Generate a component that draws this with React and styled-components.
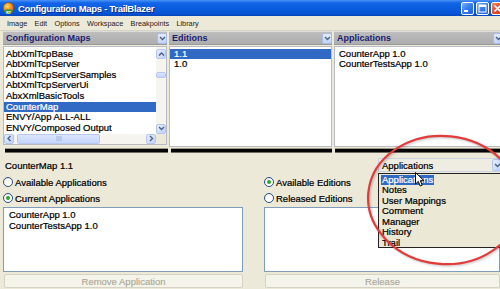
import React from "react";
import styled, { createGlobalStyle } from "styled-components";

const Global = createGlobalStyle`
  html, body { margin: 0; padding: 0; background: #ece9d8; }
  body { font-family: "Liberation Sans", Arial, sans-serif; }
`;

const FONT = `"Liberation Sans", Arial, sans-serif`;
const HEAVY = `-webkit-text-stroke: 0.22px currentColor;`;

const Window = styled.div`
  position: relative;
  width: 500px;
  height: 289px;
  overflow: hidden;
  display: flex;
  flex-direction: column;
  background: #ece9d8;
  font-family: ${FONT};
  color: #000;
`;

/* ---------- title bar ---------- */
const TitleBar = styled.div`
  height: 16px;
  flex: none;
  display: flex;
  align-items: center;
  padding-left: 2px;
  background: linear-gradient(to bottom, #4a93f7 0%, #1466e8 18%, #0a5cdf 55%, #0754d6 85%, #0446b8 100%);
`;

const TitleText = styled.span`
  margin-left: 3px;
  font-size: 9.5px;
  font-weight: 700;
  color: #fff;
  letter-spacing: -0.3px;
  text-shadow: 1px 1px 0 #0a2a8a;
  white-space: nowrap;
`;

const WinButtons = styled.div`
  margin-left: auto;
  margin-right: -4px;
  display: flex;
  gap: 2px;
`;

const WinButton = styled.div`
  width: 13px;
  height: 13px;
  box-sizing: border-box;
  border: 1px solid #fff;
  border-radius: 2px;
  display: flex;
  align-items: center;
  justify-content: center;
  background: ${(p) =>
    p.$close
      ? "linear-gradient(135deg, #f08a6a 0%, #e0502e 45%, #c33a17 100%)"
      : "linear-gradient(135deg, #7fb0fb 0%, #3a7ef0 45%, #2160d8 100%)"};
`;

/* ---------- menu bar ---------- */
const MenuBar = styled.div`
  height: 15px;
  flex: none;
  display: flex;
  align-items: center;
  gap: 7.3px;
  padding-left: 7px;
  font-size: 7.3px;
  color: #222;
  border-bottom: 1px solid #d8d4c2;
  box-sizing: border-box;
`;

const MenuItem = styled.span`
  white-space: nowrap;
`;

/* ---------- top panes ---------- */
const Panes = styled.div`
  height: 115px;
  flex: none;
  display: grid;
  grid-template-columns: 164px 163px 169px;
  column-gap: 2px;
  padding-left: 3px;
  padding-bottom: 1px;
  box-sizing: border-box;
`;

const Pane = styled.div`
  display: flex;
  flex-direction: column;
  min-width: 0;
`;

const PaneHeader = styled.div`
  height: 14px;
  flex: none;
  box-sizing: border-box;
  display: flex;
  align-items: center;
  padding-left: 3px;
  background: linear-gradient(to bottom, #bdbdbd, #adadad);
  border-top: 1px solid #dcdcdc;
  border-bottom: 1px solid #9a9a9a;
  font-size: 9px;
  font-weight: 700;
  color: #1c1c72;
  white-space: nowrap;
`;

const HeaderButton = styled.div`
  margin-left: auto;
  width: 10px;
  height: 11px;
  box-sizing: border-box;
  border: 1px solid #a9bbe6;
  border-radius: 2px;
  background: linear-gradient(to bottom, #e3ebfd, #c3d3f8);
  display: flex;
  align-items: center;
  justify-content: center;
`;

const ListBox = styled.div`
  margin-top: 1px;
  margin-bottom: ${(p) => (p.$scroll ? 2 : 0)}px;
  flex: 1;
  min-height: 0;
  background: #fff;
  border: 1px solid #b9bcc4;
  display: grid;
  grid-template-columns: ${(p) => (p.$scroll ? "1fr 10px" : "1fr")};
  grid-template-rows: ${(p) => (p.$scroll ? "1fr 10px" : "1fr")};
  overflow: hidden;
`;

const Items = styled.div`
  padding-top: 1.5px;
  min-width: 0;
  overflow: hidden;
`;

const Row = styled.div`
  height: 10.67px;
  line-height: 10.67px;
  font-size: 9.5px;
  ${HEAVY}
  padding-left: ${(p) => p.$inset}px;
  white-space: nowrap;
  color: ${(p) => (p.$selected ? "#fff" : "#000")};
  background: ${(p) => (p.$selected ? "#316ac5" : "transparent")};
`;

const VScroll = styled.div`
  display: flex;
  flex-direction: column;
  background: #f5f4ef;
  padding-top: 2px;
`;

const HScroll = styled.div`
  display: flex;
  align-items: center;
  background: #f5f4ef;
`;

const Corner = styled.div`
  background: #ece9d8;
`;

const ScrollArrow = styled.div`
  width: 10px;
  height: 10px;
  flex: none;
  box-sizing: border-box;
  border: 1px solid #b5c7f1;
  border-radius: 2px;
  background: linear-gradient(135deg, #e6eefd, #bfd1f9);
  display: flex;
  align-items: center;
  justify-content: center;
`;

const Track = styled.div`
  flex: 1;
  display: flex;
  flex-direction: ${(p) => (p.$vertical ? "column" : "row")};
`;

const Thumb = styled.div`
  flex: none;
  box-sizing: border-box;
  border: 1px solid #b5c7f1;
  border-radius: 2px;
  background: linear-gradient(to bottom, #dbe5fd, #c5d5f9);
  display: flex;
  align-items: center;
  justify-content: center;
`;

/* ---------- splitter ---------- */
const Splitter = styled.div`
  height: 9px;
  flex: none;
  display: flex;
  gap: 3px;
  padding: 2px 0 2px 5px;
  box-sizing: border-box;
`;

const SplitBar = styled.div`
  flex: ${(p) => (p.$w ? `0 0 ${p.$w}px` : "1")};
  background: linear-gradient(to bottom, #9c9a90 0, #9c9a90 1px, #050505 1px, #050505 4px, #6d6b62 4px);
`;

/* ---------- bottom panel ---------- */
const Bottom = styled.div`
  flex: 1;
  display: grid;
  grid-template-columns: 240px 1fr;
  column-gap: 21px;
  padding: 3px 0 0 3px;
  min-height: 0;
`;

const Column = styled.div`
  display: flex;
  flex-direction: column;
  min-width: 0;
`;

const TopRow = styled.div`
  height: 14px;
  flex: none;
  display: flex;
  align-items: center;
  margin-bottom: 2px;
`;

const Label = styled.span`
  font-size: 9.5px;
  ${HEAVY}
  padding-left: 2px;
  white-space: nowrap;
`;

const RadioRow = styled.label`
  height: 16px;
  flex: none;
  display: flex;
  align-items: center;
  gap: 2px;
  font-size: 9.5px;
  ${HEAVY}
  white-space: nowrap;
`;

const RadioDot = styled.span`
  width: 10px;
  height: 10px;
  box-sizing: border-box;
  border-radius: 50%;
  border: 1px solid #2a4f86;
  -webkit-text-stroke: 0;
  background: radial-gradient(circle at 60% 60%, #ffffff 0%, #ffffff 40%, #e4e2d7 100%);
  display: flex;
  align-items: center;
  justify-content: center;
  &::after {
    content: "";
    width: 4px;
    height: 4px;
    border-radius: 50%;
    background: ${(p) => (p.$checked ? "#2ea52e" : "transparent")};
  }
`;

const Box = styled.div`
  margin-top: 1px;
  height: 65px;
  flex: none;
  box-sizing: border-box;
  background: #fff;
  border: 1px solid #7f9db9;
  padding-top: 2px;
`;

const BoxRow = styled.div`
  height: 10.67px;
  line-height: 10.67px;
  font-size: 9.5px;
  ${HEAVY}
  padding-left: 5px;
  white-space: nowrap;
`;

const Button = styled.div`
  margin-top: 2px;
  margin-left: 1px;
  height: 14px;
  flex: none;
  box-sizing: border-box;
  border: 1px solid #d6d3c4;
  border-radius: 2px;
  background: #f5f4ea;
  display: flex;
  align-items: center;
  justify-content: center;
  font-size: 9.5px;
  -webkit-text-stroke: 0.15px currentColor;
  color: #aca899;
  white-space: nowrap;
`;

const Combo = styled.div`
  position: relative;
  margin-left: 114px;
  flex: 1;
  height: 14px;
  box-sizing: border-box;
  border: 1px solid #c9d3e2;
  background: #efede2;
  display: flex;
  align-items: center;
  padding-left: 3px;
  font-size: 9.5px;
  ${HEAVY}
  white-space: nowrap;
  margin-right: -3px;
`;

const ComboArrow = styled.div`
  margin-left: auto;
  width: 10px;
  height: 12px;
  box-sizing: border-box;
  border: 1px solid #b5c7f1;
  border-radius: 2px;
  background: linear-gradient(135deg, #e6eefd, #bfd1f9);
  display: flex;
  align-items: center;
  justify-content: center;
`;

const DropList = styled.div`
  position: absolute;
  top: 14px;
  left: -1px;
  width: 126px;
  height: 75px;
  box-sizing: border-box;
  border: 1px solid #222;
  background: #ebe8d6;
  padding-top: 0.5px;
  z-index: 5;
`;

const DropItem = styled.div`
  height: 10.5px;
  line-height: 10.5px;
  font-size: 9.5px;
  padding-left: 2px;
`;

const DropText = styled.span`
  padding: 0 1px;
  color: ${(p) => (p.$selected ? "#fff" : "#000")};
  background: ${(p) => (p.$selected ? "#316ac5" : "transparent")};
  display: inline-block;
`;

const Annotation = styled.svg`
  position: absolute;
  left: 0;
  top: 0;
  pointer-events: none;
  z-index: 10;
  filter: drop-shadow(1px 1px 1px rgba(0, 0, 0, 0.25));
`;

const Cursor = styled.svg`
  position: absolute;
  left: 415px;
  top: 172px;
  z-index: 11;
  pointer-events: none;
`;

/* ---------- small drawings ---------- */
const Chevron = ({ dir = "down", color = "#4d6185" }) => {
  const paths = {
    down: "M1 2 L3.5 4.5 L6 2",
    up: "M1 4.5 L3.5 2 L6 4.5",
    left: "M4.5 1 L2 3.5 L4.5 6",
    right: "M2 1 L4.5 3.5 L2 6",
  };
  return (
    <svg width="7" height="7" viewBox="0 0 7 7">
      <path d={paths[dir]} fill="none" stroke={color} strokeWidth="1.4" />
    </svg>
  );
};

const AppIcon = () => (
  <svg width="13" height="13" viewBox="0 0 13 13">
    <defs>
      <radialGradient id="ai" cx="40%" cy="35%" r="70%">
        <stop offset="0%" stopColor="#ffe06a" />
        <stop offset="45%" stopColor="#f49a22" />
        <stop offset="100%" stopColor="#c8401a" />
      </radialGradient>
    </defs>
    <circle cx="6.5" cy="6" r="5.5" fill="url(#ai)" stroke="#7a3a10" strokeWidth="0.6" />
    <path d="M2 8.5 Q6.5 6 11 8.5 L10 11 Q6.5 13 3 11 Z" fill="#3c9a3c" />
    <text x="6.5" y="11.8" fontSize="3.5" fontFamily="Liberation Sans" fontWeight="700" fill="#fff" textAnchor="middle">
      RT
    </text>
  </svg>
);

const configMaps = [
  "AbtXmlTcpBase",
  "AbtXmlTcpServer",
  "AbtXmlTcpServerSamples",
  "AbtXmlTcpServerUi",
  "AbxXmlBasicTools",
  "CounterMap",
  "ENVY/App ALL-ALL",
  "ENVY/Composed Output",
];

const dropItems = ["Applications", "Notes", "User Mappings", "Comment", "Manager", "History", "Trail"];

export default function App() {
  return (
    <>
      <Global />
      <Window>
        <TitleBar>
          <AppIcon />
          <TitleText>Configuration Maps - TrailBlazer</TitleText>
          <WinButtons>
            <WinButton>
              <svg width="9" height="9" viewBox="0 0 9 9">
                <rect x="1" y="6" width="4" height="2" fill="#fff" />
              </svg>
            </WinButton>
            <WinButton>
              <svg width="9" height="9" viewBox="0 0 9 9">
                <rect x="1" y="1" width="7" height="7" fill="none" stroke="#fff" strokeWidth="1" />
                <rect x="1" y="1" width="7" height="2" fill="#fff" />
              </svg>
            </WinButton>
            <WinButton $close>
              <svg width="9" height="9" viewBox="0 0 9 9">
                <path d="M1.5 1.5 L7.5 7.5 M7.5 1.5 L1.5 7.5" stroke="#fff" strokeWidth="1.6" />
              </svg>
            </WinButton>
          </WinButtons>
        </TitleBar>

        <MenuBar>
          {["Image", "Edit", "Options", "Workspace", "Breakpoints", "Library"].map((m) => (
            <MenuItem key={m}>{m}</MenuItem>
          ))}
        </MenuBar>

        <Panes>
          <Pane>
            <PaneHeader>
              Configuration Maps
              <HeaderButton>
                <Chevron />
              </HeaderButton>
            </PaneHeader>
            <ListBox $scroll>
              <Items>
                {configMaps.map((c) => (
                  <Row key={c} $inset={2} $selected={c === "CounterMap"}>
                    {c}
                  </Row>
                ))}
              </Items>
              <VScroll>
                <ScrollArrow>
                  <Chevron dir="up" />
                </ScrollArrow>
                <Track $vertical>
                  <Thumb style={{ marginTop: 13, height: 6 }} />
                </Track>
                <ScrollArrow>
                  <Chevron dir="down" />
                </ScrollArrow>
              </VScroll>
              <HScroll>
                <ScrollArrow>
                  <Chevron dir="left" />
                </ScrollArrow>
                <Track>
                  <Thumb style={{ marginLeft: 3, width: 83, height: 10 }}>
                    <svg width="6" height="5" viewBox="0 0 6 5">
                      <path d="M1 0 V5 M3 0 V5 M5 0 V5" stroke="#9fb2de" strokeWidth="1" />
                    </svg>
                  </Thumb>
                </Track>
                <ScrollArrow>
                  <Chevron dir="right" />
                </ScrollArrow>
              </HScroll>
              <Corner />
            </ListBox>
          </Pane>

          <Pane>
            <PaneHeader>
              Editions
              <HeaderButton>
                <Chevron />
              </HeaderButton>
            </PaneHeader>
            <ListBox>
              <Items>
                <Row $inset={4} $selected>
                  1.1
                </Row>
                <Row $inset={4}>1.0</Row>
              </Items>
            </ListBox>
          </Pane>

          <Pane>
            <PaneHeader>
              Applications
              <HeaderButton>
                <Chevron />
              </HeaderButton>
            </PaneHeader>
            <ListBox>
              <Items>
                <Row $inset={4}>CounterApp 1.0</Row>
                <Row $inset={4}>CounterTestsApp 1.0</Row>
              </Items>
            </ListBox>
          </Pane>
        </Panes>

        <Splitter>
          <SplitBar $w={163} />
          <SplitBar $w={161} />
          <SplitBar />
        </Splitter>

        <Bottom>
          <Column>
            <TopRow>
              <Label>CounterMap 1.1</Label>
            </TopRow>
            <RadioRow>
              <RadioDot />
              Available Applications
            </RadioRow>
            <RadioRow>
              <RadioDot $checked />
              Current Applications
            </RadioRow>
            <Box>
              <BoxRow>CounterApp 1.0</BoxRow>
              <BoxRow>CounterTestsApp 1.0</BoxRow>
            </Box>
            <Button>Remove Application</Button>
          </Column>

          <Column>
            <TopRow>
              <Combo>
                Applications
                <ComboArrow>
                  <Chevron />
                </ComboArrow>
                <DropList>
                  {dropItems.map((d, i) => (
                    <DropItem key={d}>
                      <DropText $selected={i === 0}>{d}</DropText>
                    </DropItem>
                  ))}
                </DropList>
              </Combo>
            </TopRow>
            <RadioRow>
              <RadioDot $checked />
              Available Editions
            </RadioRow>
            <RadioRow>
              <RadioDot />
              Released Editions
            </RadioRow>
            <Box />
            <Button>Release</Button>
          </Column>
        </Bottom>

        <Annotation width="500" height="289" viewBox="0 0 500 289">
          <ellipse
            cx="444"
            cy="200"
            rx="76"
            ry="64"
            transform="rotate(6 444 200)"
            fill="none"
            stroke="#e23b3b"
            strokeWidth="2.2"
          />
        </Annotation>

        <Cursor width="11" height="16" viewBox="0 0 11 16">
          <path d="M0.5 0.5 L0.5 12 L3.3 9.4 L5.2 14 L7.2 13.2 L5.4 8.7 L9 8.7 Z" fill="#fff" stroke="#000" strokeWidth="1" strokeLinejoin="round" />
        </Cursor>
      </Window>
    </>
  );
}
